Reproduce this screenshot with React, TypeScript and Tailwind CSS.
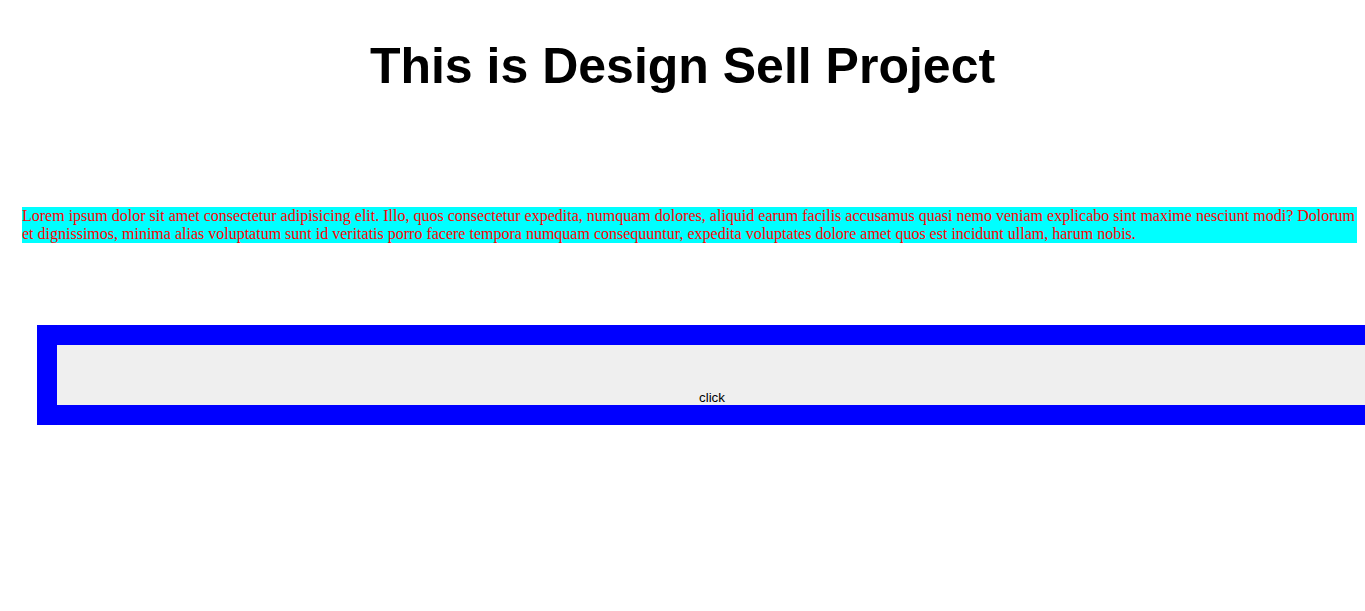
export default function App() {
  return (
    <div className="w-full h-[611px] overflow-hidden bg-white">
      <div className="flex flex-col">
        {/* 제목 */}
        <h1 className="mt-[37px] text-center text-[50px] leading-[58px] font-bold text-black font-['Liberation_Sans',Arial,sans-serif]">
          This is Design Sell Project
        </h1>

        {/* 본문 */}
        <p className="mt-[112px] ml-[22px] mr-[8px] bg-[#00ffff] text-[16px] leading-[18px] text-[#ff0000] font-['Liberation_Serif','Times_New_Roman',serif]">
          Lorem ipsum dolor sit amet consectetur adipisicing elit. Illo, quos
          consectetur expedita, numquam dolores, aliquid earum facilis accusamus
          quasi nemo veniam explicabo sint maxime nesciunt modi? Dolorum et
          dignissimos, minima alias voluptatum sunt id veritatis porro facere
          tempora numquam consequuntur, expedita voluptates dolore amet quos est
          incidunt ullam, harum nobis.
        </p>

        {/* 버튼 박스 */}
        <div className="mt-[82px] ml-[37px] w-[1350px] shrink-0 h-[100px] border-[20px] border-[#0000ff] bg-[#efefef] flex items-end justify-center">
          <span className="text-[13.33px] leading-[15px] text-black font-['Liberation_Sans',Arial,sans-serif]">
            click
          </span>
        </div>
      </div>
    </div>
  );
}
